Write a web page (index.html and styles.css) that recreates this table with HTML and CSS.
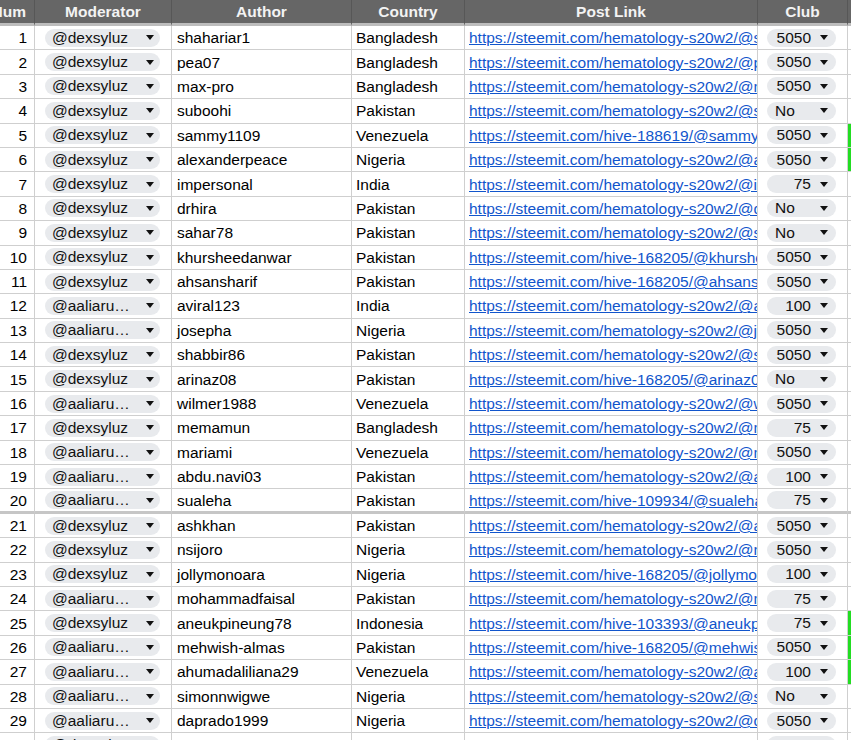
FILE: index.html
```html
<!DOCTYPE html>
<html lang="en">
<head>
<meta charset="utf-8">
<title>Sheet</title>
<link rel="stylesheet" href="styles.css">
</head>
<body>
<div class="sheet">
  <div class="row head">
    <div class="c num">Num</div>
    <div class="c">Moderator</div>
    <div class="c">Author</div>
    <div class="c">Country</div>
    <div class="c">Post Link</div>
    <div class="c">Club</div>
    <div class="c g"></div>
  </div>

  <div class="row"><div class="c num">1</div><div class="c mod"><span class="chip mchip"><span class="ct">@dexsyluz</span><i class="tri"></i></span></div><div class="c au">shahariar1</div><div class="c co">Bangladesh</div><div class="c link"><a href="#">https://steemit.com/hematology-s20w2/@shahariar1/hematology</a></div><div class="c club"><span class="chip cchip"><span class="ct n">5050</span><i class="tri"></i></span></div><div class="c g"></div></div>
  <div class="row"><div class="c num">2</div><div class="c mod"><span class="chip mchip"><span class="ct">@dexsyluz</span><i class="tri"></i></span></div><div class="c au">pea07</div><div class="c co">Bangladesh</div><div class="c link"><a href="#">https://steemit.com/hematology-s20w2/@pea07/hematology</a></div><div class="c club"><span class="chip cchip"><span class="ct n">5050</span><i class="tri"></i></span></div><div class="c g"></div></div>
  <div class="row"><div class="c num">3</div><div class="c mod"><span class="chip mchip"><span class="ct">@dexsyluz</span><i class="tri"></i></span></div><div class="c au">max-pro</div><div class="c co">Bangladesh</div><div class="c link"><a href="#">https://steemit.com/hematology-s20w2/@max-pro/hematology</a></div><div class="c club"><span class="chip cchip"><span class="ct n">5050</span><i class="tri"></i></span></div><div class="c g"></div></div>
  <div class="row"><div class="c num">4</div><div class="c mod"><span class="chip mchip"><span class="ct">@dexsyluz</span><i class="tri"></i></span></div><div class="c au">suboohi</div><div class="c co">Pakistan</div><div class="c link"><a href="#">https://steemit.com/hematology-s20w2/@suboohi/hematology</a></div><div class="c club"><span class="chip cchip"><span class="ct">No</span><i class="tri"></i></span></div><div class="c g"></div></div>
  <div class="row"><div class="c num">5</div><div class="c mod"><span class="chip mchip"><span class="ct">@dexsyluz</span><i class="tri"></i></span></div><div class="c au">sammy1109</div><div class="c co">Venezuela</div><div class="c link"><a href="#">https://steemit.com/hive-188619/@sammy1109/hematology</a></div><div class="c club"><span class="chip cchip"><span class="ct n">5050</span><i class="tri"></i></span></div><div class="c g green"></div></div>
  <div class="row"><div class="c num">6</div><div class="c mod"><span class="chip mchip"><span class="ct">@dexsyluz</span><i class="tri"></i></span></div><div class="c au">alexanderpeace</div><div class="c co">Nigeria</div><div class="c link"><a href="#">https://steemit.com/hematology-s20w2/@alexanderpeace/hematology</a></div><div class="c club"><span class="chip cchip"><span class="ct n">5050</span><i class="tri"></i></span></div><div class="c g green"></div></div>
  <div class="row"><div class="c num">7</div><div class="c mod"><span class="chip mchip"><span class="ct">@dexsyluz</span><i class="tri"></i></span></div><div class="c au">impersonal</div><div class="c co">India</div><div class="c link"><a href="#">https://steemit.com/hematology-s20w2/@impersonal/hematology</a></div><div class="c club"><span class="chip cchip"><span class="ct n">75</span><i class="tri"></i></span></div><div class="c g"></div></div>
  <div class="row"><div class="c num">8</div><div class="c mod"><span class="chip mchip"><span class="ct">@dexsyluz</span><i class="tri"></i></span></div><div class="c au">drhira</div><div class="c co">Pakistan</div><div class="c link"><a href="#">https://steemit.com/hematology-s20w2/@drhira/hematology</a></div><div class="c club"><span class="chip cchip"><span class="ct">No</span><i class="tri"></i></span></div><div class="c g"></div></div>
  <div class="row"><div class="c num">9</div><div class="c mod"><span class="chip mchip"><span class="ct">@dexsyluz</span><i class="tri"></i></span></div><div class="c au">sahar78</div><div class="c co">Pakistan</div><div class="c link"><a href="#">https://steemit.com/hematology-s20w2/@sahar78/hematology</a></div><div class="c club"><span class="chip cchip"><span class="ct">No</span><i class="tri"></i></span></div><div class="c g"></div></div>
  <div class="row"><div class="c num">10</div><div class="c mod"><span class="chip mchip"><span class="ct">@dexsyluz</span><i class="tri"></i></span></div><div class="c au">khursheedanwar</div><div class="c co">Pakistan</div><div class="c link"><a href="#">https://steemit.com/hive-168205/@khursheedanwar/hematology</a></div><div class="c club"><span class="chip cchip"><span class="ct n">5050</span><i class="tri"></i></span></div><div class="c g"></div></div>
  <div class="row"><div class="c num">11</div><div class="c mod"><span class="chip mchip"><span class="ct">@dexsyluz</span><i class="tri"></i></span></div><div class="c au">ahsansharif</div><div class="c co">Pakistan</div><div class="c link"><a href="#">https://steemit.com/hive-168205/@ahsansharif/hematology</a></div><div class="c club"><span class="chip cchip"><span class="ct n">5050</span><i class="tri"></i></span></div><div class="c g"></div></div>
  <div class="row"><div class="c num">12</div><div class="c mod"><span class="chip mchip"><span class="ct">@aaliarubel</span><i class="tri"></i></span></div><div class="c au">aviral123</div><div class="c co">India</div><div class="c link"><a href="#">https://steemit.com/hematology-s20w2/@aviral123/hematology</a></div><div class="c club"><span class="chip cchip"><span class="ct n">100</span><i class="tri"></i></span></div><div class="c g"></div></div>
  <div class="row"><div class="c num">13</div><div class="c mod"><span class="chip mchip"><span class="ct">@aaliarubel</span><i class="tri"></i></span></div><div class="c au">josepha</div><div class="c co">Nigeria</div><div class="c link"><a href="#">https://steemit.com/hematology-s20w2/@josepha/hematology</a></div><div class="c club"><span class="chip cchip"><span class="ct n">5050</span><i class="tri"></i></span></div><div class="c g"></div></div>
  <div class="row"><div class="c num">14</div><div class="c mod"><span class="chip mchip"><span class="ct">@dexsyluz</span><i class="tri"></i></span></div><div class="c au">shabbir86</div><div class="c co">Pakistan</div><div class="c link"><a href="#">https://steemit.com/hematology-s20w2/@shabbir86/hematology</a></div><div class="c club"><span class="chip cchip"><span class="ct n">5050</span><i class="tri"></i></span></div><div class="c g"></div></div>
  <div class="row"><div class="c num">15</div><div class="c mod"><span class="chip mchip"><span class="ct">@dexsyluz</span><i class="tri"></i></span></div><div class="c au">arinaz08</div><div class="c co">Pakistan</div><div class="c link"><a href="#">https://steemit.com/hive-168205/@arinaz08/hematology</a></div><div class="c club"><span class="chip cchip"><span class="ct">No</span><i class="tri"></i></span></div><div class="c g"></div></div>
  <div class="row"><div class="c num">16</div><div class="c mod"><span class="chip mchip"><span class="ct">@aaliarubel</span><i class="tri"></i></span></div><div class="c au">wilmer1988</div><div class="c co">Venezuela</div><div class="c link"><a href="#">https://steemit.com/hematology-s20w2/@wilmer1988/hematology</a></div><div class="c club"><span class="chip cchip"><span class="ct n">5050</span><i class="tri"></i></span></div><div class="c g"></div></div>
  <div class="row"><div class="c num">17</div><div class="c mod"><span class="chip mchip"><span class="ct">@dexsyluz</span><i class="tri"></i></span></div><div class="c au">memamun</div><div class="c co">Bangladesh</div><div class="c link"><a href="#">https://steemit.com/hematology-s20w2/@memamun/hematology</a></div><div class="c club"><span class="chip cchip"><span class="ct n">75</span><i class="tri"></i></span></div><div class="c g"></div></div>
  <div class="row"><div class="c num">18</div><div class="c mod"><span class="chip mchip"><span class="ct">@aaliarubel</span><i class="tri"></i></span></div><div class="c au">mariami</div><div class="c co">Venezuela</div><div class="c link"><a href="#">https://steemit.com/hematology-s20w2/@mariami/hematology</a></div><div class="c club"><span class="chip cchip"><span class="ct n">5050</span><i class="tri"></i></span></div><div class="c g"></div></div>
  <div class="row"><div class="c num">19</div><div class="c mod"><span class="chip mchip"><span class="ct">@aaliarubel</span><i class="tri"></i></span></div><div class="c au">abdu.navi03</div><div class="c co">Pakistan</div><div class="c link"><a href="#">https://steemit.com/hematology-s20w2/@abdu.navi03/hematology</a></div><div class="c club"><span class="chip cchip"><span class="ct n">100</span><i class="tri"></i></span></div><div class="c g"></div></div>
  <div class="row sep"><div class="c num">20</div><div class="c mod"><span class="chip mchip"><span class="ct">@aaliarubel</span><i class="tri"></i></span></div><div class="c au">sualeha</div><div class="c co">Pakistan</div><div class="c link"><a href="#">https://steemit.com/hive-109934/@sualeha/hematology</a></div><div class="c club"><span class="chip cchip"><span class="ct n">75</span><i class="tri"></i></span></div><div class="c g"></div></div>
  <div class="row"><div class="c num">21</div><div class="c mod"><span class="chip mchip"><span class="ct">@dexsyluz</span><i class="tri"></i></span></div><div class="c au">ashkhan</div><div class="c co">Pakistan</div><div class="c link"><a href="#">https://steemit.com/hematology-s20w2/@ashkhan/hematology</a></div><div class="c club"><span class="chip cchip"><span class="ct n">5050</span><i class="tri"></i></span></div><div class="c g"></div></div>
  <div class="row"><div class="c num">22</div><div class="c mod"><span class="chip mchip"><span class="ct">@dexsyluz</span><i class="tri"></i></span></div><div class="c au">nsijoro</div><div class="c co">Nigeria</div><div class="c link"><a href="#">https://steemit.com/hematology-s20w2/@nsijoro/hematology</a></div><div class="c club"><span class="chip cchip"><span class="ct n">5050</span><i class="tri"></i></span></div><div class="c g"></div></div>
  <div class="row"><div class="c num">23</div><div class="c mod"><span class="chip mchip"><span class="ct">@dexsyluz</span><i class="tri"></i></span></div><div class="c au">jollymonoara</div><div class="c co">Nigeria</div><div class="c link"><a href="#">https://steemit.com/hive-168205/@jollymonoara/hematology</a></div><div class="c club"><span class="chip cchip"><span class="ct n">100</span><i class="tri"></i></span></div><div class="c g"></div></div>
  <div class="row"><div class="c num">24</div><div class="c mod"><span class="chip mchip"><span class="ct">@aaliarubel</span><i class="tri"></i></span></div><div class="c au">mohammadfaisal</div><div class="c co">Pakistan</div><div class="c link"><a href="#">https://steemit.com/hematology-s20w2/@mohammadfaisal/hematology</a></div><div class="c club"><span class="chip cchip"><span class="ct n">75</span><i class="tri"></i></span></div><div class="c g"></div></div>
  <div class="row"><div class="c num">25</div><div class="c mod"><span class="chip mchip"><span class="ct">@dexsyluz</span><i class="tri"></i></span></div><div class="c au">aneukpineung78</div><div class="c co">Indonesia</div><div class="c link"><a href="#">https://steemit.com/hive-103393/@aneukpineung78/hematology</a></div><div class="c club"><span class="chip cchip"><span class="ct n">75</span><i class="tri"></i></span></div><div class="c g green"></div></div>
  <div class="row"><div class="c num">26</div><div class="c mod"><span class="chip mchip"><span class="ct">@aaliarubel</span><i class="tri"></i></span></div><div class="c au">mehwish-almas</div><div class="c co">Pakistan</div><div class="c link"><a href="#">https://steemit.com/hive-168205/@mehwish-almas/hematology</a></div><div class="c club"><span class="chip cchip"><span class="ct n">5050</span><i class="tri"></i></span></div><div class="c g green"></div></div>
  <div class="row"><div class="c num">27</div><div class="c mod"><span class="chip mchip"><span class="ct">@aaliarubel</span><i class="tri"></i></span></div><div class="c au">ahumadaliliana29</div><div class="c co">Venezuela</div><div class="c link"><a href="#">https://steemit.com/hematology-s20w2/@ahumadaliliana29/hematology</a></div><div class="c club"><span class="chip cchip"><span class="ct n">100</span><i class="tri"></i></span></div><div class="c g green"></div></div>
  <div class="row"><div class="c num">28</div><div class="c mod"><span class="chip mchip"><span class="ct">@aaliarubel</span><i class="tri"></i></span></div><div class="c au">simonnwigwe</div><div class="c co">Nigeria</div><div class="c link"><a href="#">https://steemit.com/hematology-s20w2/@simonnwigwe/hematology</a></div><div class="c club"><span class="chip cchip"><span class="ct">No</span><i class="tri"></i></span></div><div class="c g"></div></div>
  <div class="row"><div class="c num">29</div><div class="c mod"><span class="chip mchip"><span class="ct">@aaliarubel</span><i class="tri"></i></span></div><div class="c au">daprado1999</div><div class="c co">Nigeria</div><div class="c link"><a href="#">https://steemit.com/hematology-s20w2/@daprado1999/hematology</a></div><div class="c club"><span class="chip cchip"><span class="ct n">5050</span><i class="tri"></i></span></div><div class="c g"></div></div>
  <div class="row"><div class="c num">30</div><div class="c mod"><span class="chip mchip"><span class="ct">@dexsyluz</span><i class="tri"></i></span></div><div class="c au"></div><div class="c co"></div><div class="c link"></div><div class="c club"><span class="chip cchip"><span class="ct n">5050</span><i class="tri"></i></span></div><div class="c g"></div></div>
</div>
</body>
</html>
```

FILE: styles.css
```css
* {
  box-sizing: border-box;
}

html,
body {
  margin: 0;
  height: 740px;
  overflow: hidden;
  background: #ffffff;
}

body {
  font-family: "Liberation Sans", Arial, sans-serif;
  font-size: 15.5px;
  color: #000000;
}

.sheet {
  display: flex;
  flex-direction: column;
  width: 851px;
}

.row {
  display: grid;
  grid-template-columns: 35px 137px 180px 113px 293px 90px 1fr;
  height: 24.4px;
  flex: none;
}

.c {
  display: flex;
  align-items: center;
  min-width: 0;
  padding: 1px 4px 0 4px;
  overflow: hidden;
  white-space: nowrap;
  border-right: 1px solid #cfcfcf;
  border-bottom: 1px solid #cfcfcf;
}

.c.g {
  border-right: none;
}

.c.green {
  background: #22dd22;
}

.head {
  height: 26px;
}

.head .c {
  justify-content: center;
  background: #666666;
  color: #f3f3f3;
  font-weight: bold;
  border-right-color: #575757;
  border-bottom: 3px solid #bdbdbd;
}

.head .c.g {
  border-right: none;
}

.c.num,
.head .c.num {
  justify-content: flex-end;
  padding: 1px 7px 0 0;
}

.head .c.num {
  padding-right: 8px;
}

.sep .c {
  border-bottom: 3px solid #c6c6c6;
}

.au {
  padding-left: 5px;
}

.co {
  padding-left: 4px;
}

.c.link {
  padding: 1px 0 0 4px;
}

.link a {
  display: block;
  min-width: 0;
  overflow: hidden;
  color: #1155cc;
  text-decoration: underline;
}

.c.mod {
  padding: 0 0 0 10px;
}

.c.club {
  padding: 0 0 0 9px;
}

.chip {
  display: flex;
  align-items: center;
  height: 18px;
  border-radius: 9px;
  background: #e8eaed;
  color: #111111;
}

.mchip {
  width: 115px;
  padding: 0 6px 0 7px;
}

.mchip .ct {
  width: 80px;
  overflow: hidden;
  text-overflow: ellipsis;
  white-space: nowrap;
  margin-right: auto;
}

.cchip {
  width: 69px;
  padding: 0 8px 0 8px;
}

.cchip .ct {
  flex: 1;
  margin-right: 9px;
  text-align: left;
}

.cchip .ct.n {
  text-align: right;
}

.tri {
  flex: none;
  width: 0;
  height: 0;
  border-left: 4.5px solid transparent;
  border-right: 4.5px solid transparent;
  border-top: 5px solid #111111;
}
```
